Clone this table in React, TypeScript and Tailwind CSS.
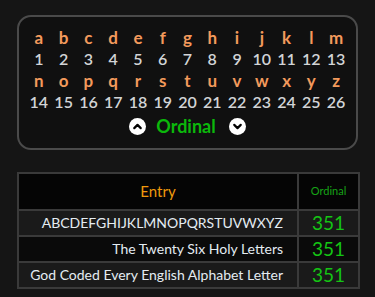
import { ChevronDown, ChevronUp } from "lucide-react";

const letters = "abcdefghijklmnopqrstuvwxyz".split("");

const rows = [
  { text: "ABCDEFGHIJKLMNOPQRSTUVWXYZ", value: 351 },
  { text: "The Twenty Six Holy Letters", value: 351 },
  { text: "God Coded Every English Alphabet Letter", value: 351 },
];

function LetterBlock({ start }: { start: number }) {
  const part = letters.slice(start, start + 13);
  return (
    <div className="grid w-[322px] grid-cols-13 text-center text-[16px] font-bold leading-[21px]">
      {part.map((l) => (
        <span key={l} className="text-[17px] text-[#f39a5c]">
          {l}
        </span>
      ))}
      {part.map((l, i) => (
        <span key={l + "n"} className="font-semibold text-[#d2d4d6]">
          {start + i + 1}
        </span>
      ))}
    </div>
  );
}

export default function App() {
  return (
    <div
      className="min-h-[297px] w-[375px] bg-[#151515] px-[17px] pt-[15px]"
      style={{ fontFamily: "Lato, 'Open Sans', sans-serif" }}
    >
      <div className="flex flex-col items-center rounded-[14px] border-2 border-[#4a4a4a] bg-[#101010] pb-[10px] pt-[10px]">
        <LetterBlock start={0} />
        <div className="h-[1px]" />
        <LetterBlock start={13} />
        <div className="mt-[2px] flex items-center">
          <span className="flex h-[17px] w-[17px] items-center justify-center rounded-full bg-white">
            <ChevronUp size={13} strokeWidth={4} color="#000" />
          </span>
          <span className="ml-[10px] text-[18px] font-bold leading-[24px] text-[#0bb80b]">Ordinal</span>
          <span className="ml-[13px] flex h-[17px] w-[17px] items-center justify-center rounded-full bg-white">
            <ChevronDown size={13} strokeWidth={4} color="#000" />
          </span>
        </div>
      </div>

      <table className="mt-[22px] w-[343px] border-collapse border-2 border-[#3a3a3a]">
        <thead>
          <tr className="h-[37px] bg-[#050505]">
            <th className="border-2 border-[#3a3a3a] text-[15px] font-normal text-[#f09a0c]">Entry</th>
            <th className="w-[61px] border-2 border-[#3a3a3a] text-[11px] font-normal text-[#16a316]">Ordinal</th>
          </tr>
        </thead>
        <tbody>
          {rows.map((r, i) => (
            <tr key={r.text} className={i % 2 === 0 ? "h-[26px] bg-[#1a1a1a]" : "h-[26px] bg-[#0a0a0a]"}>
              <td className="border-2 border-[#3a3a3a] pr-[14px] text-right text-[14px] leading-[22px] text-[#e4ecf2]">
                {r.text}
              </td>
              <td className="border-2 border-[#3a3a3a] text-center text-[19px] leading-[22px] text-[#14c414]">
                {r.value}
              </td>
            </tr>
          ))}
        </tbody>
      </table>
    </div>
  );
}
